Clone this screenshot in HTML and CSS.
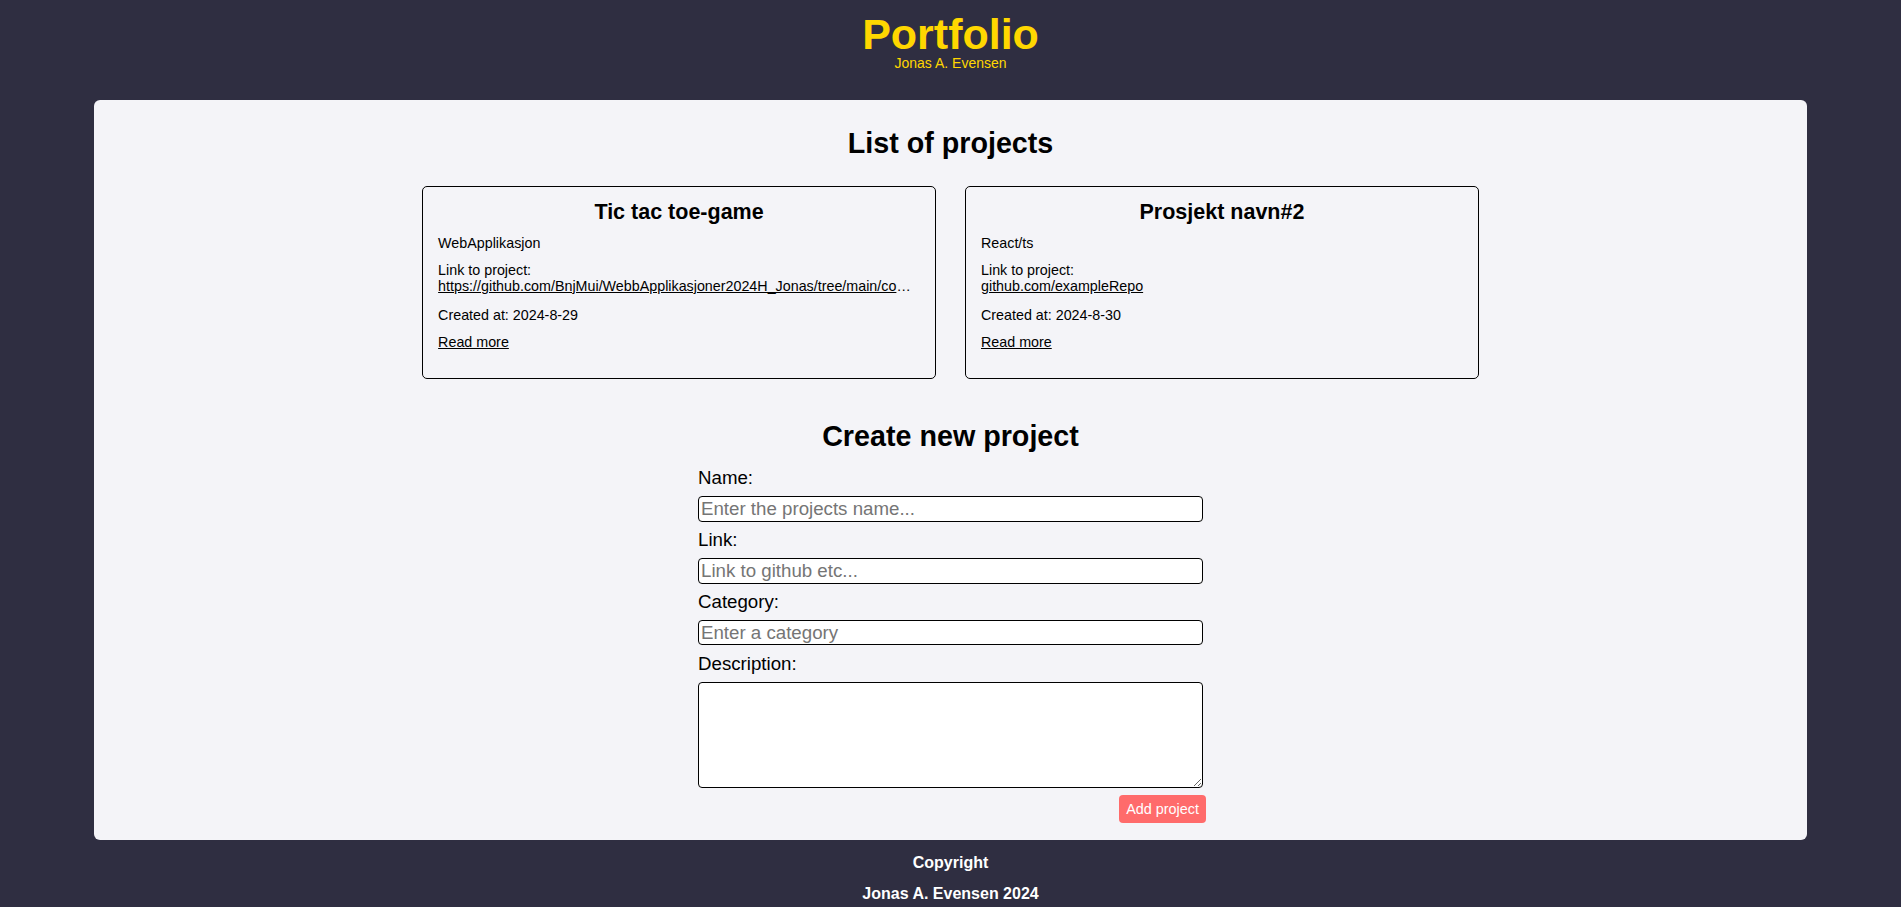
FILE: index.html
```html
<!DOCTYPE html>
<html lang="en">
<head>
<meta charset="utf-8">
<title>Portfolio</title>
<link rel="stylesheet" href="styles.css">
</head>
<body>
<header class="site-header">
  <h1 class="site-title">Portfolio</h1>
  <p class="site-subtitle">Jonas A. Evensen</p>
</header>
<main class="panel">
  <section class="projects">
    <h2 class="section-title">List of projects</h2>
    <div class="project-list">
      <article class="project-card">
        <h3 class="card-title">Tic tac toe-game</h3>
        <p class="card-category">WebApplikasjon</p>
        <p class="card-link">Link to project:<a class="card-url" href="#">https://github.com/BnjMui/WebbApplikasjoner2024H_Jonas/tree/main/components</a></p>
        <p class="card-date">Created at: 2024-8-29</p>
        <p class="card-more"><a href="#">Read more</a></p>
      </article>
      <article class="project-card">
        <h3 class="card-title">Prosjekt navn#2</h3>
        <p class="card-category">React/ts</p>
        <p class="card-link">Link to project:<a class="card-url" href="#">github.com/exampleRepo</a></p>
        <p class="card-date">Created at: 2024-8-30</p>
        <p class="card-more"><a href="#">Read more</a></p>
      </article>
    </div>
  </section>
  <section class="create">
    <h2 class="section-title create-title">Create new project</h2>
    <form class="project-form">
      <label class="form-label" for="name">Name:</label>
      <input class="form-input" id="name" type="text" placeholder="Enter the projects name...">
      <label class="form-label" for="link">Link:</label>
      <input class="form-input" id="link" type="text" placeholder="Link to github etc...">
      <label class="form-label" for="category">Category:</label>
      <input class="form-input" id="category" type="text" placeholder="Enter a category">
      <label class="form-label" for="description">Description:</label>
      <textarea class="form-textarea" id="description"></textarea>
      <button class="form-button" type="button">Add project</button>
    </form>
  </section>
</main>
<footer class="site-footer">
  <p class="footer-line">Copyright</p>
  <p class="footer-line footer-name">Jonas A. Evensen 2024</p>
</footer>
</body>
</html>
```

FILE: styles.css
```css
html, body {
  margin: 0;
  padding: 0;
}

body {
  background: #2f2e41;
  font-family: "Liberation Sans", Arial, sans-serif;
  color: #000;
}

.site-header {
  padding-top: 12.4px;
  text-align: center;
}

.site-title {
  margin: 0;
  font-size: 43px;
  line-height: 44px;
  font-weight: bold;
  color: #ffd700;
}

.site-subtitle {
  margin: -1px 0 0;
  font-size: 14px;
  line-height: 16.1px;
  color: #ffd700;
}

.panel {
  box-sizing: border-box;
  width: 1713px;
  margin: 28.5px auto 0;
  padding: 27px 0 16.8px;
  background: #f4f4f8;
  border-radius: 6px;
}

.section-title {
  margin: 0;
  font-size: 28.7px;
  line-height: 33px;
  font-weight: bold;
  text-align: center;
}

.project-list {
  display: flex;
  justify-content: center;
  gap: 29px;
  margin-top: 26px;
}

.project-card {
  box-sizing: border-box;
  width: 30%;
  min-width: 0;
  padding: 13.2px 15px 26.8px;
  border: 1px solid #000;
  border-radius: 5px;
  font-size: 14.3px;
  line-height: 15.4px;
}

.card-title {
  margin: 0;
  font-size: 21.5px;
  line-height: 24.7px;
  font-weight: bold;
  text-align: center;
}

.project-card p {
  margin: 0;
}

.project-card .card-category {
  margin-top: 11.3px;
}

.project-card .card-link {
  margin-top: 11.7px;
}

.card-url {
  display: block;
  color: #000;
  white-space: nowrap;
  overflow: hidden;
  text-overflow: ellipsis;
}

.project-card .card-date {
  margin-top: 14px;
}

.project-card .card-more {
  margin-top: 12px;
}

.card-more a {
  color: #000;
}

.section-title.create-title {
  margin-top: 41px;
}

.project-form {
  display: flex;
  flex-direction: column;
  gap: 7.4px;
  width: 505px;
  margin: 14.8px auto 0;
  font-size: 18.7px;
}

.form-label {
  line-height: 21.5px;
}

.form-input {
  box-sizing: border-box;
  width: 100%;
  height: 25.5px;
  margin: 0;
  padding: 1px 2px;
  border: 1px solid #000;
  border-radius: 4px;
  background: #fff;
  font-family: "Liberation Sans", Arial, sans-serif;
  font-size: 18.7px;
  line-height: 21.5px;
  color: #000;
}

.form-input::placeholder {
  color: #757575;
}

.form-textarea {
  box-sizing: border-box;
  width: 100%;
  height: 106px;
  margin: 0;
  padding: 2px;
  border: 1px solid #000;
  border-radius: 4px;
  background: #fff;
  font-family: "Liberation Sans", Arial, sans-serif;
  font-size: 18.7px;
}

.form-button {
  align-self: flex-end;
  margin-right: -3px;
  height: 28px;
  padding: 0 7px;
  border: none;
  border-radius: 4px;
  background: #ff6b6b;
  color: #fff;
  font-family: "Liberation Sans", Arial, sans-serif;
  font-size: 14.4px;
}

.site-footer {
  padding-top: 14px;
  text-align: center;
  color: #fff;
}

.footer-line {
  margin: 0;
  font-size: 16px;
  line-height: 18.4px;
  font-weight: bold;
}

.footer-name {
  margin-top: 12.2px;
}
```
